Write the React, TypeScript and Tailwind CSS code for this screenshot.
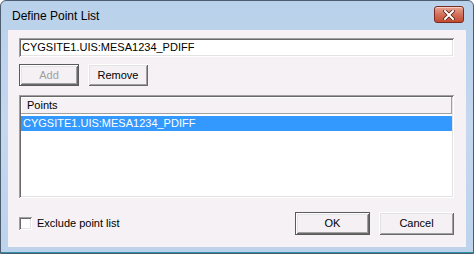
import React from 'react';

const font = { fontFamily: '"Liberation Sans", Arial, sans-serif' };

const Btn = ({ label, disabled, isDefault }: { label: string; disabled?: boolean; isDefault?: boolean }) => (
  <button
    className={`w-[60px] h-[22px] text-[11px] flex items-center justify-center bg-[#f4f0f4] ${
      isDefault ? 'border border-[#5a5a5a]' : ''
    } ${disabled ? 'text-[#a0a0a0]' : 'text-black'} shadow-[inset_1px_1px_#ffffff,inset_-1px_-1px_#696969,inset_2px_2px_#e3e3e3,inset_-2px_-2px_#a0a0a0]`}
  >
    {label}
  </button>
);

const DlgBtn = ({ label, isDefault }: { label: string; isDefault?: boolean }) => (
  <button
    className={`w-[75px] h-[23px] text-[11px] flex items-center justify-center bg-[#f4f0f4] text-black ${
      isDefault ? 'border border-[#5a5a5a]' : ''
    } shadow-[inset_1px_1px_#ffffff,inset_-1px_-1px_#696969,inset_2px_2px_#e3e3e3,inset_-2px_-2px_#a0a0a0]`}
  >
    {label}
  </button>
);

export default function App() {
  return (
    <div
      className="w-[474px] h-[254px] flex flex-col bg-gradient-to-b from-[#b9d1ea] via-[#c4d8ef] to-[#bdd3ec] border border-[#4d5d70] rounded-t-[6px] overflow-hidden"
      style={font}
    >
      {/* title bar */}
      <div className="h-[29px] shrink-0 flex items-center justify-between pl-[11px] pr-[9px]">
        <span className="text-[12px] text-black pt-[1px]">Define Point List</span>
        <div className="w-[30px] h-[17px] mt-[-2px] rounded-[3px] border border-[#7a2a1e] bg-gradient-to-b from-[#e8a593] via-[#d3705b] to-[#c24a2f] flex items-center justify-center shadow-[inset_0_1px_rgba(255,255,255,0.5)]">
          <svg width="12" height="10" viewBox="0 0 12 10">
            <path d="M2 1 L10 9 M10 1 L2 9" stroke="#5a1e14" strokeWidth="3.6" strokeLinecap="square" />
            <path d="M2 1 L10 9 M10 1 L2 9" stroke="#ffffff" strokeWidth="2" strokeLinecap="square" />
          </svg>
        </div>
      </div>

      {/* client area */}
      <div className="mx-[7px] h-[217px] bg-[#f5f1f5] flex flex-col pl-[11px] pr-[12px] pt-[8px]">
        <div className="h-[19px] bg-white flex items-center pl-[3px] text-[11px] text-black shadow-[inset_1px_1px_#a0a0a0,inset_-1px_-1px_#ffffff,inset_2px_2px_#696969,inset_-2px_-2px_#e3e3e3]">
          CYGSITE1.UIS:MESA1234_PDIFF
        </div>

        <div className="flex gap-[9px] mt-[7px]">
          <Btn label="Add" disabled isDefault />
          <Btn label="Remove" />
        </div>

        <div className="mt-[9px] h-[103px] bg-white flex flex-col p-[2px] shadow-[inset_1px_1px_#a0a0a0,inset_-1px_-1px_#ffffff,inset_2px_2px_#696969,inset_-2px_-2px_#e3e3e3]">
          <div className="h-[17px] bg-[#f5f1f5] flex items-center pl-[6px] text-[11px] text-black border-r border-b border-[#a0a0a0] shadow-[inset_1px_1px_#ffffff]">
            Points
          </div>
          <div className="mt-[2px] h-[15px] bg-[#3399ff] text-white text-[11px] flex items-center pl-[2px]">
            CYGSITE1.UIS:MESA1234_PDIFF
          </div>
        </div>

        <div className="flex items-center mt-[14px]">
          <div className="w-[13px] h-[13px] bg-white shadow-[inset_1px_1px_#a0a0a0,inset_-1px_-1px_#ffffff,inset_2px_2px_#696969,inset_-2px_-2px_#e3e3e3]" />
          <span className="ml-[5px] text-[11px] text-black">Exclude point list</span>
          <div className="ml-auto flex gap-[9px]">
            <DlgBtn label="OK" isDefault />
            <DlgBtn label="Cancel" />
          </div>
        </div>
      </div>
      <div className="flex-1 border-b border-[#2f8fa8]" />
    </div>
  );
}
